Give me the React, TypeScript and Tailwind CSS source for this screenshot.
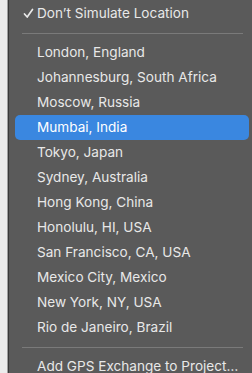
import React from "react";

const items = [
  "London, England",
  "Johannesburg, South Africa",
  "Moscow, Russia",
  "Mumbai, India",
  "Tokyo, Japan",
  "Sydney, Australia",
  "Hong Kong, China",
  "Honolulu, HI, USA",
  "San Francisco, CA, USA",
  "Mexico City, Mexico",
  "New York, NY, USA",
  "Rio de Janeiro, Brazil",
];

function Row({ label, active, check }: { label: string; active?: boolean; check?: boolean }) {
  return (
    <div
      className={
        "h-[25px] flex items-center rounded-[5px] ml-[6px] mr-[3px] " +
        (active ? "bg-[#3a87e0] text-white" : "text-[#e8e8e8]")
      }
    >
      <div className="w-[22px] flex justify-end pr-[2px]">
        {check ? (
          <svg width="11" height="11" viewBox="0 0 11 11" className="mr-[1px]">
            <path d="M1.5 6 L4.2 9 L9.5 1.5" fill="none" stroke="#e8e8e8" strokeWidth="1.7" strokeLinecap="round" strokeLinejoin="round" />
          </svg>
        ) : null}
      </div>
      <span className="whitespace-nowrap">{label}</span>
    </div>
  );
}

function Sep() {
  return (
    <div className="h-[14px] flex items-center pl-[13px] pr-[9px]">
      <div className="h-px w-full bg-[#7a7a7a]" />
    </div>
  );
}

export default function App() {
  return (
    <div
      className="w-[252px] h-[373px] flex overflow-hidden bg-[#ececec]"
      style={{ fontFamily: 'Inter, "Liberation Sans", Arial, sans-serif' }}
    >
      <div className="w-[7px] bg-[#ececec]" />
      <div className="w-px bg-[#a0a0a0]" />
      <div className="w-px bg-[#3a3a3a]" />
      <div className="flex-1 bg-[#5a5a5a] text-[13.6px] pt-[1px]">
        <Row label="Don’t Simulate Location" check />
        <Sep />
        {items.map((it) => (
          <Row key={it} label={it} active={it === "Mumbai, India"} />
        ))}
        <Sep />
        <Row label="Add GPS Exchange to Project…" />
      </div>
    </div>
  );
}
